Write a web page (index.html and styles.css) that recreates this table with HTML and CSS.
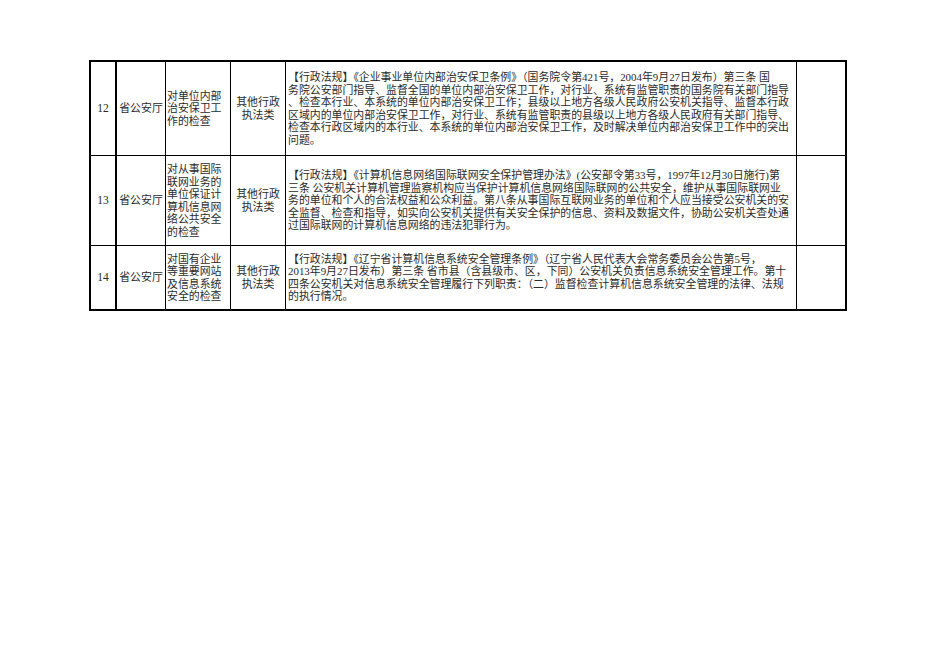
FILE: index.html
```html
<!DOCTYPE html>
<html lang="zh-CN">
<head>
<meta charset="utf-8">
<title>行政检查事项</title>
<link rel="stylesheet" href="styles.css">
</head>
<body>
<div class="sheet">
  <div class="cell c1 r12">12</div>
  <div class="cell c2 r12">省公安厅</div>
  <div class="cell c3 r12"><div>对单位内部</div><div>治安保卫工</div><div>作的检查</div></div>
  <div class="cell c4 r12"><div>其他行政</div><div>执法类</div></div>
  <div class="cell c5 r12">
    <div>【行政法规】《企业事业单位内部治安保卫条例》（国务院令第421号，2004年9月27日发布）第三条 国</div>
    <div>务院公安部门指导、监督全国的单位内部治安保卫工作，对行业、系统有监管职责的国务院有关部门指导</div>
    <div>、检查本行业、本系统的单位内部治安保卫工作；县级以上地方各级人民政府公安机关指导、监督本行政</div>
    <div>区域内的单位内部治安保卫工作，对行业、系统有监管职责的县级以上地方各级人民政府有关部门指导、</div>
    <div>检查本行政区域内的本行业、本系统的单位内部治安保卫工作，及时解决单位内部治安保卫工作中的突出</div>
    <div>问题。</div>
  </div>
  <div class="cell c6 r12"></div>

  <div class="cell c1">13</div>
  <div class="cell c2">省公安厅</div>
  <div class="cell c3"><div>对从事国际</div><div>联网业务的</div><div>单位保证计</div><div>算机信息网</div><div>络公共安全</div><div>的检查</div></div>
  <div class="cell c4"><div>其他行政</div><div>执法类</div></div>
  <div class="cell c5">
    <div>【行政法规】《计算机信息网络国际联网安全保护管理办法》(公安部令第33号，1997年12月30日施行)第</div>
    <div>三条 公安机关计算机管理监察机构应当保护计算机信息网络国际联网的公共安全，维护从事国际联网业</div>
    <div>务的单位和个人的合法权益和公众利益。第八条从事国际互联网业务的单位和个人应当接受公安机关的安</div>
    <div>全监督、检查和指导，如实向公安机关提供有关安全保护的信息、资料及数据文件，协助公安机关查处通</div>
    <div>过国际联网的计算机信息网络的违法犯罪行为。</div>
  </div>
  <div class="cell c6"></div>

  <div class="cell c1 last">14</div>
  <div class="cell c2 last">省公安厅</div>
  <div class="cell c3 last"><div>对国有企业</div><div>等重要网站</div><div>及信息系统</div><div>安全的检查</div></div>
  <div class="cell c4 last"><div>其他行政</div><div>执法类</div></div>
  <div class="cell c5 last">
    <div>【行政法规】《辽宁省计算机信息系统安全管理条例》（辽宁省人民代表大会常务委员会公告第5号，</div>
    <div>2013年9月27日发布）第三条 省市县（含县级市、区，下同）公安机关负责信息系统安全管理工作。第十</div>
    <div>四条公安机关对信息系统安全管理履行下列职责：（二）监督检查计算机信息系统安全管理的法律、法规</div>
    <div>的执行情况。</div>
  </div>
  <div class="cell c6 last"></div>
</div>
</body>
</html>
```
FILE: styles.css
```css
html, body {
  margin: 0;
  padding: 0;
  background: #ffffff;
}
body {
  padding: 60px 0 0 89px;
  font-family: "Liberation Serif", "Noto Sans CJK SC", serif;
  font-size: 10.9px;
  line-height: 12.5px;
  color: #2a2a2a;
}
.sheet {
  display: grid;
  grid-template-columns: 26px 49px 65px 55px 511px 48px;
  grid-template-rows: 94px 90px 63px;
  width: 754px;
  border: 2px solid #000;
}
.cell {
  border-right: 1px solid #000;
  border-bottom: 1px solid #000;
  display: flex;
  flex-direction: column;
  justify-content: center;
  white-space: nowrap;
  overflow: hidden;
}
.cell.last {
  border-bottom: none;
}
.c1 {
  border-right-width: 2px;
  align-items: center;
  font-size: 11.5px;
}
.c2 {
  align-items: center;
}
.c3 {
  padding-left: 1px;
  align-items: flex-start;
}
.c4 {
  align-items: center;
}
.c5 {
  padding-left: 2px;
  align-items: flex-start;
}
.c6 {
  border-right: none;
}
```
